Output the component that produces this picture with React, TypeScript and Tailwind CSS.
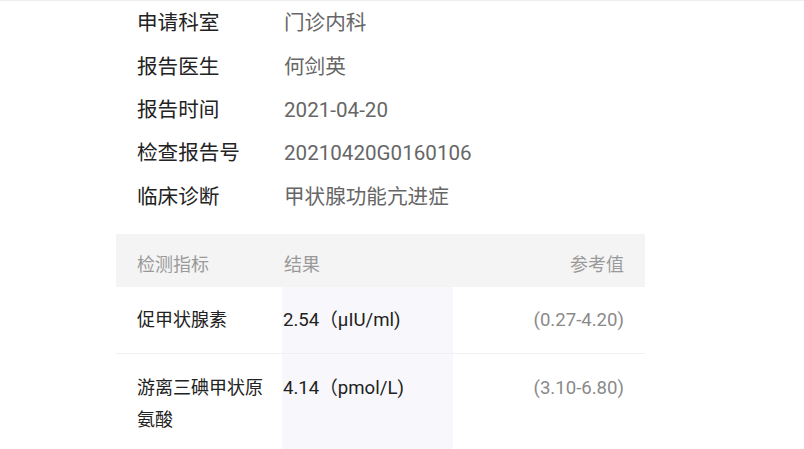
import React from 'react';

const info = [
  { label: '申请科室', value: '门诊内科' },
  { label: '报告医生', value: '何剑英' },
  { label: '报告时间', value: '2021-04-20' },
  { label: '检查报告号', value: '20210420G0160106' },
  { label: '临床诊断', value: '甲状腺功能亢进症' },
];

const items = [
  { name: '促甲状腺素', result: '2.54（μIU/ml)', range: '(0.27-4.20)' },
  { name: '游离三碘甲状原氨酸', result: '4.14（pmol/L)', range: '(3.10-6.80)' },
];

export default function App() {
  return (
    <div
      className="w-[804px] h-[449px] overflow-hidden bg-white border-t border-[#eeeeee]"
      style={{ fontFamily: "Roboto, 'Noto Sans CJK SC', sans-serif" }}
    >
      <div className="ml-[116px] w-[529px]">
        {/* 基本信息 */}
        <div className="pl-[21px] pt-[1px]">
          {info.map((row) => (
            <div key={row.label} className="flex items-center h-[43.4px] text-[20.6px]">
              <span className="w-[147px] text-[#222222]">{row.label}</span>
              <span className="text-[#666666]">{row.value}</span>
            </div>
          ))}
        </div>

        {/* 检测结果 */}
        <div className="mt-[15px]">
          <div className="flex items-center h-[53px] pt-[8px] bg-[#f4f4f4] text-[18px] text-[#9a9a9a]">
            <span className="w-[166px] pl-[21px]">检测指标</span>
            <span className="flex-1 pl-[2px]">结果</span>
            <span className="pr-[21px]">参考值</span>
          </div>
          {items.map((it, i) => (
            <div
              key={it.name}
              className={`flex text-[18px] ${i === 0 ? 'border-b border-[#f0f0f0]' : ''}`}
            >
              <div className={`w-[166px] pl-[21px] pr-[2px] text-[#222222] leading-[32px] ${i === 0 ? 'h-[66px] flex items-center' : 'pt-[18px] pb-[20px]'}`}>
                {it.name}
              </div>
              <div className={`w-[171px] pl-[1px] bg-[#f8f8fc] text-[#222222] leading-[32px] text-[18.6px] ${i === 0 ? 'h-[66px] flex items-center' : 'pt-[18px]'}`}>
                {it.result}
              </div>
              <div className={`flex-1 pr-[21px] text-right text-[#8a8a8a] leading-[32px] text-[18.6px] ${i === 0 ? 'h-[66px] flex items-center justify-end' : 'pt-[18px]'}`}>
                {it.range}
              </div>
            </div>
          ))}
        </div>
      </div>
    </div>
  );
}
